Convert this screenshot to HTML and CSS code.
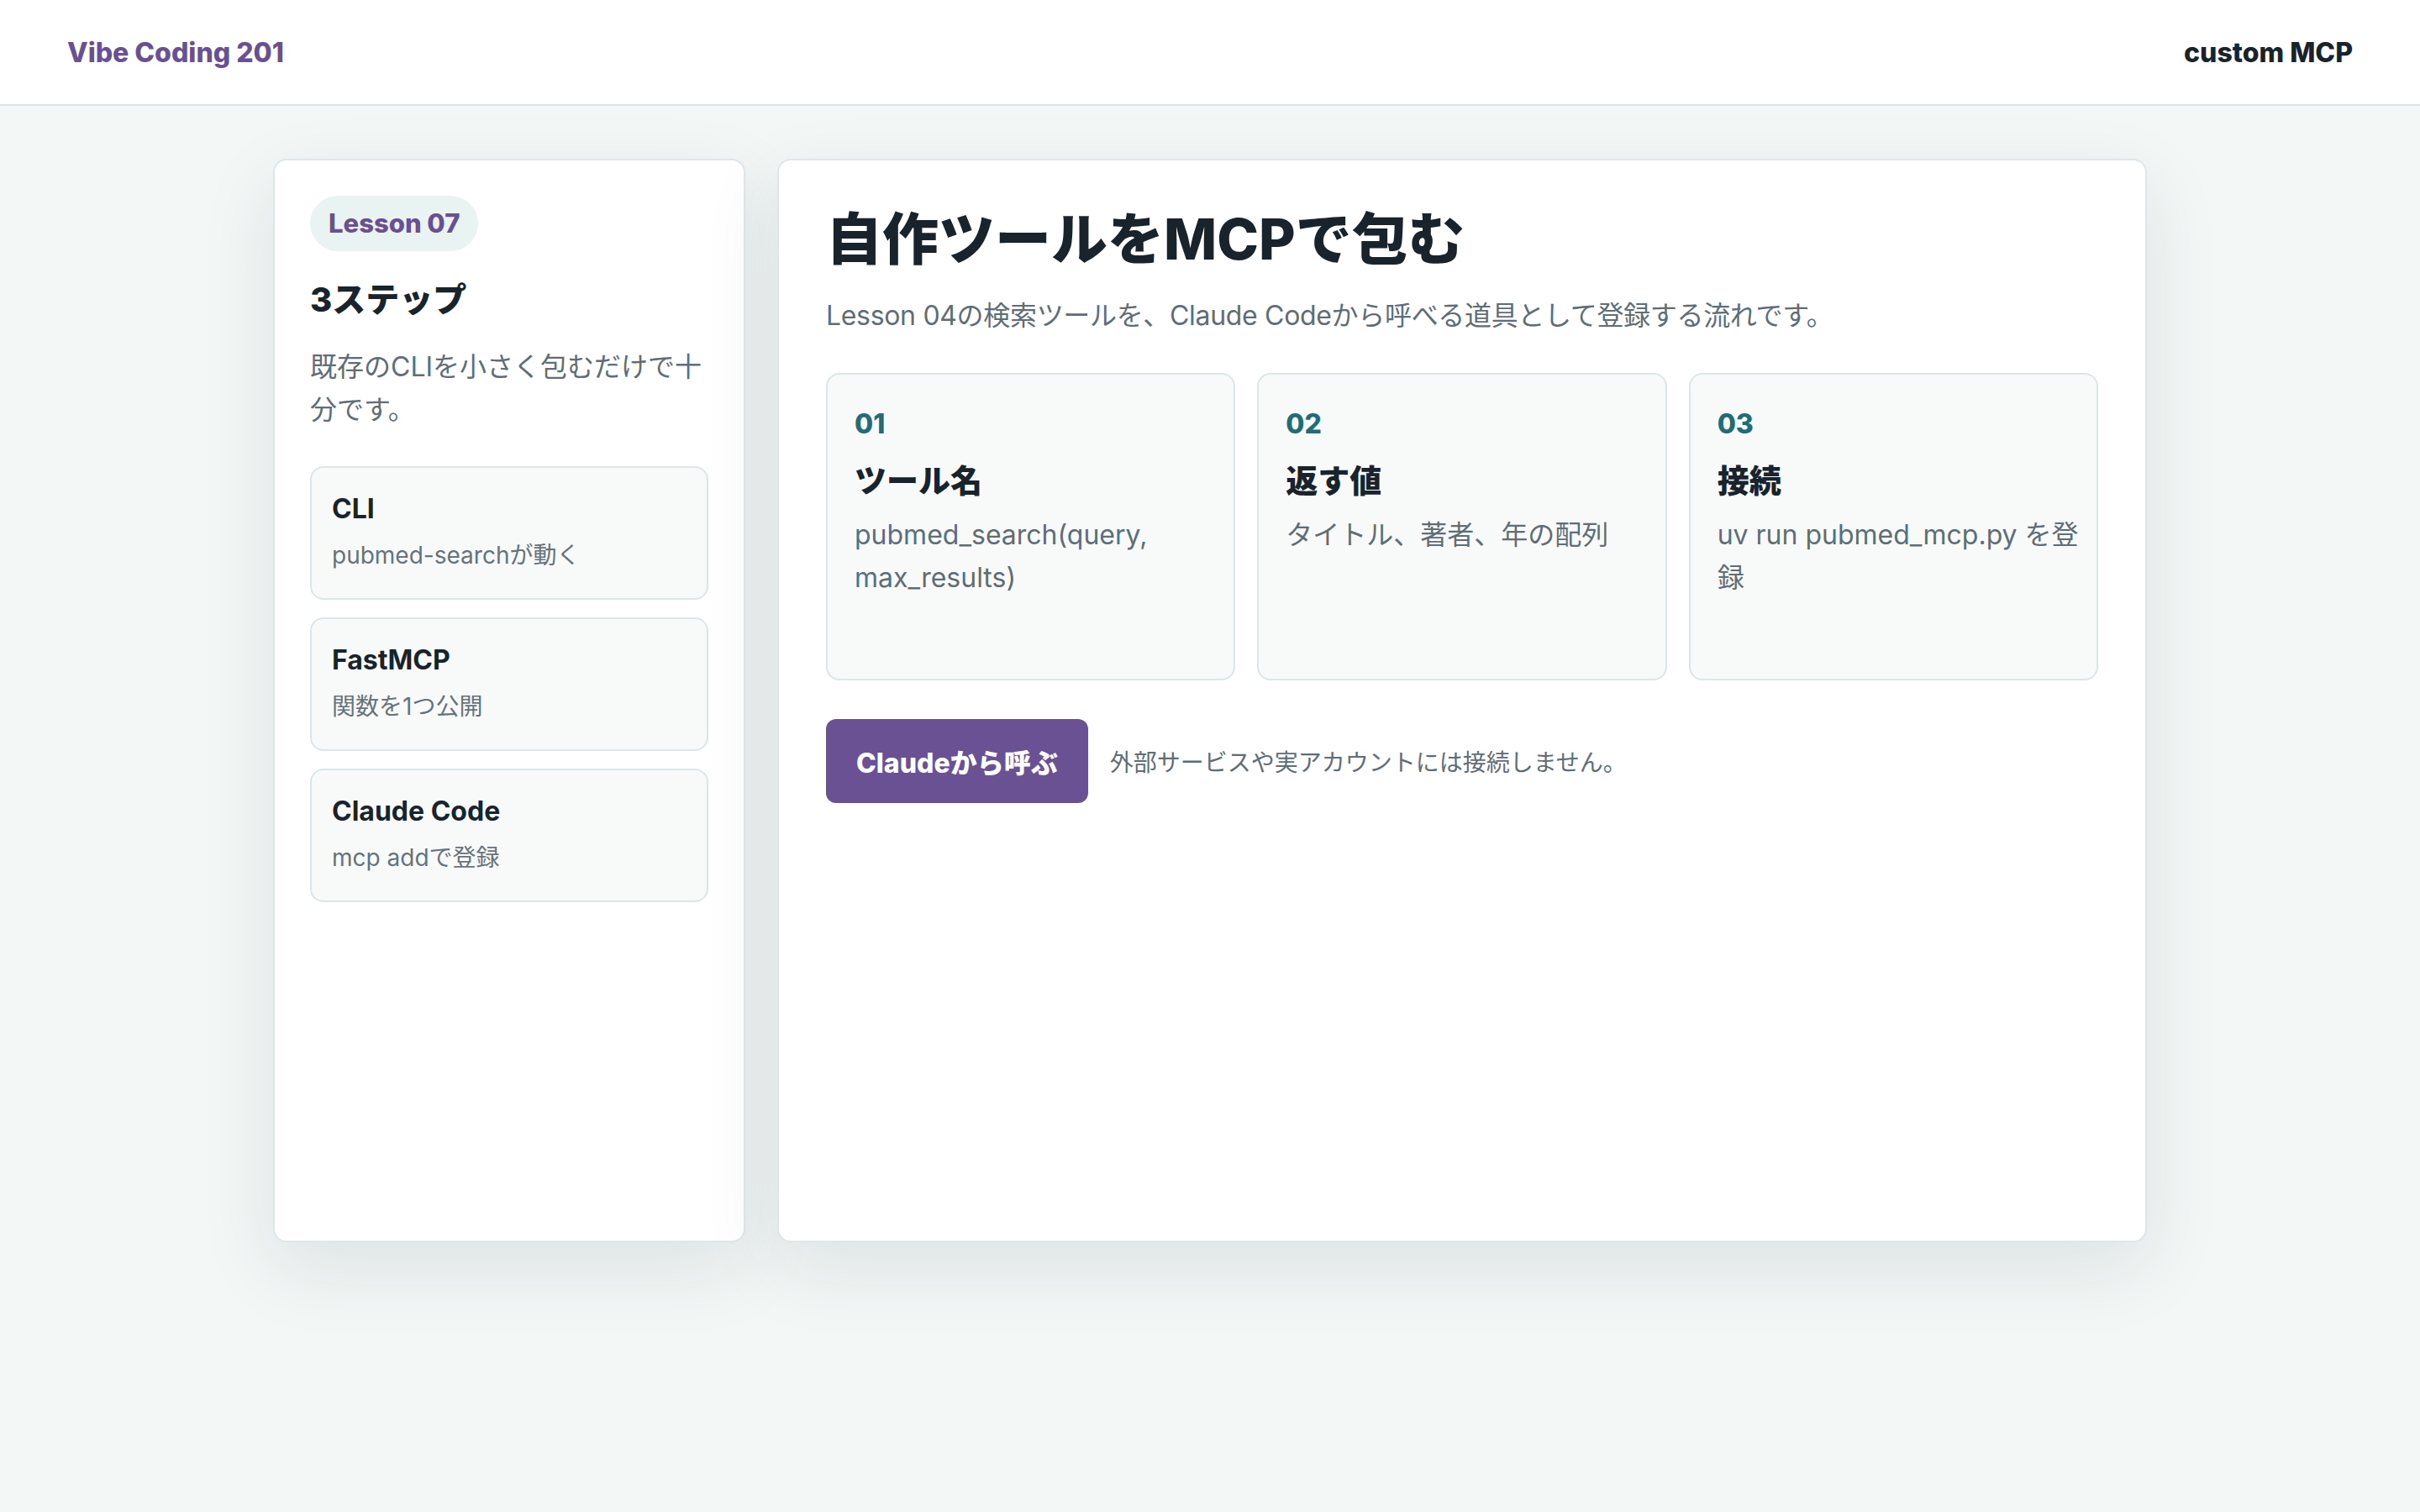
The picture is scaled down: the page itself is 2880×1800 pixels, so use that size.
FILE: index.html
```html
<!DOCTYPE html>
<html lang="ja">
<head>
    <meta charset="UTF-8">
    <meta name="viewport" content="width=device-width, initial-scale=1.0">
    <title>Lesson 07 - Vibe Coding 201</title>
    <link rel="stylesheet" href="styles.css">
</head>
<body>
    <header class="topbar">
        <div class="brand">Vibe Coding 201</div>
        <div class="topic">custom MCP</div>
    </header>

    <main class="layout">
        <aside class="card side">
            <span class="pill">Lesson 07</span>
            <h2>3ステップ</h2>
            <p class="side-desc">既存のCLIを小さく包むだけで十分です。</p>
            <div class="step-list">
                <div class="step">
                    <div class="step-title">CLI</div>
                    <div class="step-sub">pubmed-searchが動く</div>
                </div>
                <div class="step">
                    <div class="step-title">FastMCP</div>
                    <div class="step-sub">関数を1つ公開</div>
                </div>
                <div class="step">
                    <div class="step-title">Claude Code</div>
                    <div class="step-sub">mcp addで登録</div>
                </div>
            </div>
        </aside>

        <section class="card content">
            <h1>自作ツールをMCPで包む</h1>
            <p class="lead">Lesson 04の検索ツールを、Claude Codeから呼べる道具として登録する流れです。</p>

            <div class="grid">
                <div class="box">
                    <div class="num">01</div>
                    <h3>ツール名</h3>
                    <p>pubmed_search(query, max_results)</p>
                </div>
                <div class="box">
                    <div class="num">02</div>
                    <h3>返す値</h3>
                    <p>タイトル、著者、年の配列</p>
                </div>
                <div class="box">
                    <div class="num">03</div>
                    <h3>接続</h3>
                    <p>uv run pubmed_mcp.py を登録</p>
                </div>
            </div>

            <div class="actions">
                <button class="btn">Claudeから呼ぶ</button>
                <span class="note">外部サービスや実アカウントには接続しません。</span>
            </div>
        </section>
    </main>
</body>
</html>
```

FILE: styles.css
```css
body {
    margin: 0;
    padding: 0 0 160px;
    background-color: #f3f7f6;
    color: #18232b;
    font-family: Inter, "Noto Sans CJK JP", sans-serif;
}

.topbar {
    display: flex;
    justify-content: space-between;
    align-items: center;
    height: 124px;
    padding: 0 80px;
    background-color: #fff;
    border-bottom: 2px solid #dbe4e7;
}

.brand {
    color: #6a4f93;
    font-size: 32px;
    font-weight: 800;
}

.topic {
    font-size: 32px;
    font-weight: 800;
}

.layout {
    display: grid;
    grid-template-columns: 562px 1fr;
    gap: 38px;
    max-width: 2230px;
    margin: 63px auto 0;
}

.card {
    box-sizing: border-box;
    min-height: 1290px;
    background-color: #fff;
    border: 2px solid #dde6ea;
    border-radius: 16px;
    box-shadow: 0 30px 90px rgba(28, 48, 56, 0.1);
}

/* left column */
.side {
    padding: 42px;
}

.pill {
    display: inline-block;
    padding: 16px 22px;
    border-radius: 999px;
    background-color: #e9f3f1;
    color: #6a4f93;
    font-size: 31px;
    font-weight: 800;
    line-height: 34px;
}

.side h2 {
    margin: 32px 0 0;
    font-size: 40px;
    line-height: 52px;
    font-weight: 800;
}

.side-desc {
    margin: 28px 0 42px;
    color: #5f6d77;
    font-size: 32px;
    line-height: 51px;
}

.step-list {
    display: flex;
    flex-direction: column;
    gap: 21px;
}

.step {
    padding: 27px 24px 31px;
    background-color: #f8fafa;
    border: 2px solid #dce6e9;
    border-radius: 16px;
}

.step-title {
    font-size: 32px;
    line-height: 44px;
    font-weight: 700;
    margin-bottom: 13px;
}

.step-sub {
    color: #66737c;
    font-size: 28px;
    line-height: 40px;
}

/* main column */
.content {
    padding: 53px 56px;
}

.content h1 {
    margin: 0;
    font-size: 67px;
    line-height: 82px;
    font-weight: 800;
}

.lead {
    margin: 26px 0 44px;
    color: #5f6d77;
    font-size: 32px;
    line-height: 48px;
    letter-spacing: -0.01em;
}

.grid {
    display: grid;
    grid-template-columns: repeat(3, 1fr);
    gap: 26px;
}

.box {
    box-sizing: border-box;
    min-height: 366px;
    padding: 37px 18px 34px 32px;
    background-color: #f8fafa;
    border: 2px solid #dce6e9;
    border-radius: 16px;
}

.num {
    color: #216d77;
    font-size: 32px;
    line-height: 44px;
    font-weight: 800;
}

.box h3 {
    margin: 20px 0 0;
    font-size: 38px;
    line-height: 50px;
    font-weight: 800;
}

.box p {
    margin: 14px 0 0;
    color: #5f6d77;
    font-size: 32px;
    line-height: 51px;
}

.actions {
    display: flex;
    align-items: center;
    gap: 26px;
    margin-top: 46px;
}

.btn {
    height: 100px;
    padding: 0 36px;
    background-color: #6a5193;
    color: #fff;
    border: none;
    border-radius: 12px;
    font-family: inherit;
    font-size: 32px;
    font-weight: 800;
    cursor: pointer;
}

.note {
    color: #5f6d77;
    font-size: 28px;
}
```
